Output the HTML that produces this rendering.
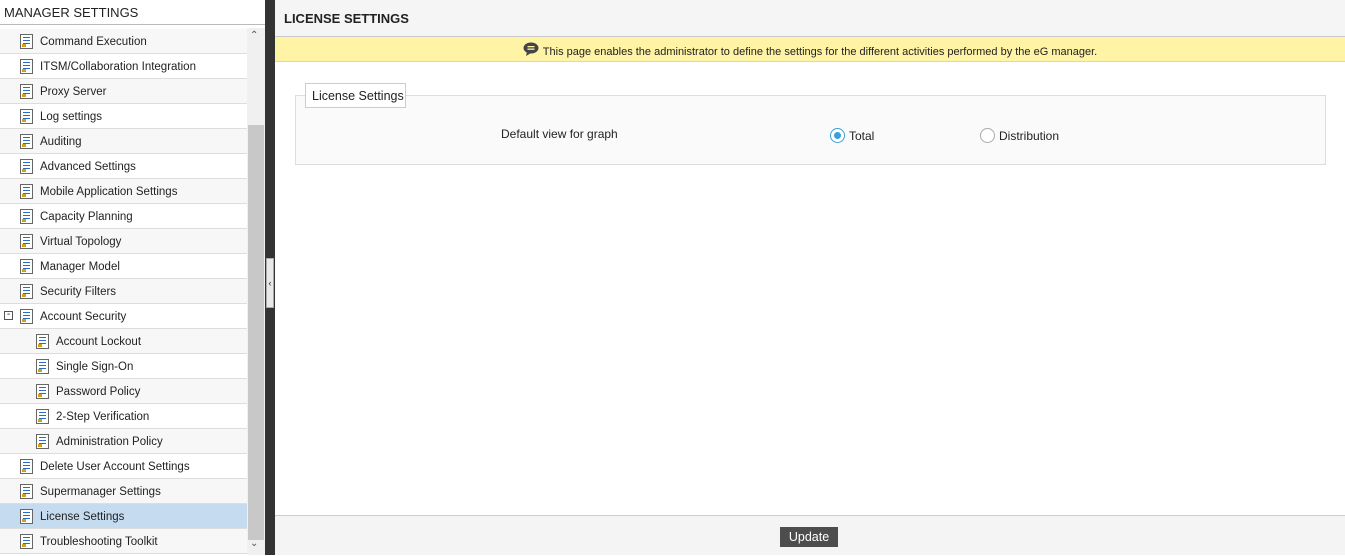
<!DOCTYPE html>
<html><head><meta charset="utf-8"><style>
*{box-sizing:border-box;margin:0;padding:0}
body{width:1345px;height:555px;overflow:hidden;font-family:"Liberation Sans",sans-serif;font-size:12px;color:#222;background:#fff;position:relative}
#side{position:absolute;left:0;top:0;width:265px;height:555px;background:#fff}
#side .hd{height:25px;border-bottom:1px solid #bbb;font-size:13px;padding:5px 0 0 4px;color:#222}
.row{position:absolute;left:0;width:247px;height:25px;border-bottom:1px solid #ddd;line-height:27px;padding-left:40px;font-size:11.5px}
.row.g{background:#f7f7f7}
.row.sel{background:#c5dcf0}
.row.sub{padding-left:56px}
.ic{position:absolute;top:5px;width:13px;height:15px;border:1px solid #666;background:#fff}
.ic:before{content:"";position:absolute;left:2px;top:2px;width:7px;height:1px;background:#2a6bc4;box-shadow:0 3px 0 #2a6bc4,0 6px 0 #2a6bc4}
.ic:after{content:"";position:absolute;left:1px;bottom:1px;width:4px;height:3px;background:#d0a020}
#track{position:absolute;left:247px;top:28px;width:18px;height:527px;background:#f0f0f0}
#thumb{position:absolute;left:248px;top:125px;width:16px;height:415px;background:#c8c8c8}
#split{position:absolute;left:265px;top:0;width:10px;height:555px;background:#333}
#handle{position:absolute;left:266px;top:258px;width:8px;height:50px;background:#e8e8e8;border:1px solid #aaa;font-size:9px;text-align:center;line-height:48px}
#main{position:absolute;left:275px;top:0;width:1070px;height:555px}
#mh{height:37px;background:#f5f5f5;border-bottom:1px solid #c8c8c8;font-size:13px;font-weight:bold;padding:11px 0 0 9px}
#note{height:25px;background:#fff3a6;border-bottom:1px solid #e8d98a;text-align:center;font-size:11px;line-height:30px}
#fs{position:absolute;left:20px;top:95px;width:1031px;height:70px;background:#fafafa;border:1px solid #ddd}
#lg{position:absolute;left:30px;top:83px;width:101px;height:25px;background:#fff;border:1px solid #ccc;font-size:12.5px;padding:5px 0 0 6px}
.rad{position:absolute;width:15px;height:15px;border-radius:50%;border:1px solid #aaa;background:#fff}
#foot{position:absolute;left:0;top:515px;width:1070px;height:40px;background:#f4f4f4;border-top:1px solid #ccc}
#btn{position:absolute;left:505px;top:11px;width:58px;height:20px;background:#4d4d4d;color:#fff;font-size:12.5px;text-align:center;line-height:20px}
</style></head><body>
<div id="side"><div class="hd">MANAGER SETTINGS</div>
<div id="track"></div><div id="thumb"></div>
<div style="position:absolute;left:250px;top:30px;font-size:10px;color:#555">&#8963;</div>
<div style="position:absolute;left:250px;top:538px;font-size:10px;color:#555">&#8964;</div>
</div>
<div id="rows"></div>
<div id="split"></div><div id="handle">&#8249;</div>
<div id="main">
<div id="mh">LICENSE SETTINGS</div>
<div id="note"><svg width="16" height="14" viewBox="0 0 16 14" style="vertical-align:-1px;margin-right:4px"><ellipse cx="8" cy="6" rx="7.5" ry="5.5" fill="#444"/><path d="M4 10 L3 14 L8 11Z" fill="#444"/><rect x="4.5" y="4" width="7" height="1.3" fill="#fff3a6"/><rect x="4.5" y="6.5" width="7" height="1.3" fill="#fff3a6"/></svg>This page enables the administrator to define the settings for the different activities performed by the eG manager.</div>
<div id="fs"></div>
<div id="lg">License Settings</div>
<div style="position:absolute;left:226px;top:127px;font-size:12px">Default view for graph</div>
<div class="rad" style="left:555px;top:128px;border-color:#3aa0d8"><div style="position:absolute;left:3px;top:3px;width:7px;height:7px;border-radius:50%;background:#3aa0d8"></div></div>
<div style="position:absolute;left:574px;top:129px">Total</div>
<div class="rad" style="left:705px;top:128px"></div>
<div style="position:absolute;left:724px;top:129px">Distribution</div>
<div id="foot"><div id="btn">Update</div></div>
</div>
<script>
var items=[["Command Execution",0],["ITSM/Collaboration Integration",0],["Proxy Server",0],["Log settings",0],["Auditing",0],["Advanced Settings",0],["Mobile Application Settings",0],["Capacity Planning",0],["Virtual Topology",0],["Manager Model",0],["Security Filters",0],["Account Security",2],["Account Lockout",1],["Single Sign-On",1],["Password Policy",1],["2-Step Verification",1],["Administration Policy",1],["Delete User Account Settings",0],["Supermanager Settings",0],["License Settings",3],["Troubleshooting Toolkit",0]];
var h="";items.forEach(function(it,i){var t=30+25*i;var cls="row"+(i%2==0?" g":"")+(it[1]==1?" sub":"")+(it[1]==3?" sel":"");var il=it[1]==1?36:20;
h+='<div class="'+cls+'" style="top:'+(t-1)+'px"><span class="ic" style="left:'+il+'px"></span>'+(it[1]==2?'<span style="position:absolute;left:4px;top:7px;width:9px;height:9px;border:1px solid #555;line-height:6px;font-size:10px;text-align:center">-</span>':'')+it[0]+'</div>';});
document.getElementById("rows").innerHTML=h;
</script>
</body></html>
